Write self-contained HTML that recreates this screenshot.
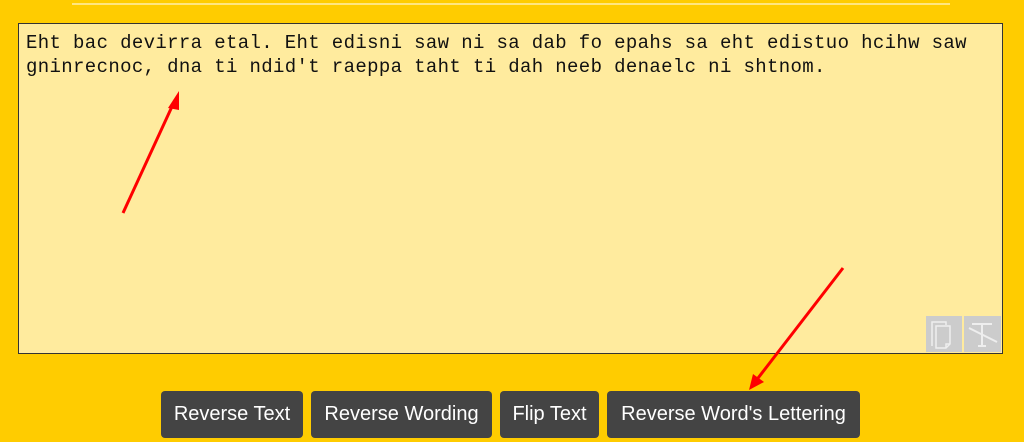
<!DOCTYPE html>
<html><head><style>
body{margin:0;width:1024px;height:442px;background:#ffcc00;position:relative;overflow:hidden;font-family:"Liberation Sans",sans-serif}
.top{position:absolute;left:72px;top:3px;width:878px;height:2px;background:#ffe680}
.ta{position:absolute;left:18px;top:23px;width:983px;height:329px;border:1px solid #333;background:#ffeb9e}
.txt{position:absolute;left:26px;top:31px;width:975px;font-family:"Liberation Mono",monospace;font-size:19px;letter-spacing:0.36px;line-height:24px;color:#111;white-space:pre}
.ic{position:absolute;top:316px;width:36px;height:36px;background:#ccc}
.btn{position:absolute;top:391px;height:47px;background:#444;color:#fff;border-radius:4px;font-size:20px;line-height:47px;text-align:center}
</style></head><body>
<div class="top"></div>
<div class="ta"></div>
<div class="txt">Eht bac devirra etal. Eht edisni saw ni sa dab fo epahs sa eht edistuo hcihw saw
gninrecnoc, dna ti ndid't raeppa taht ti dah neeb denaelc ni shtnom.</div>
<div class="ic" style="left:926px"><svg width="36" height="36"><g fill="none" stroke="#eee" stroke-width="1.5"><path d="M6 30V6h14v3"/><path d="M10 10h14v18l-4 4H10z"/><path d="M20 32v-4h4"/></g></svg></div>
<div class="ic" style="left:964px;width:37px"><svg width="37" height="36"><g fill="none" stroke="#eee" stroke-width="2"><path d="M8 8h20M18 8v22M14 30h8M5 12l28 14"/></g></svg></div>
<svg style="position:absolute;left:0;top:0" width="1024" height="442"><g stroke="#f00" stroke-width="3" fill="#f00">
<line x1="123" y1="213" x2="175" y2="100"/><polygon points="179,91 168,108 179,110" stroke="none"/>
<line x1="843" y1="268" x2="755" y2="382"/><polygon points="749,390 753,374 764,382" stroke="none"/></g></svg>
<div class="btn" style="left:161px;width:142px">Reverse Text</div>
<div class="btn" style="left:311px;width:181px">Reverse Wording</div>
<div class="btn" style="left:500px;width:99px">Flip Text</div>
<div class="btn" style="left:607px;width:253px">Reverse Word's Lettering</div>
</body></html>
